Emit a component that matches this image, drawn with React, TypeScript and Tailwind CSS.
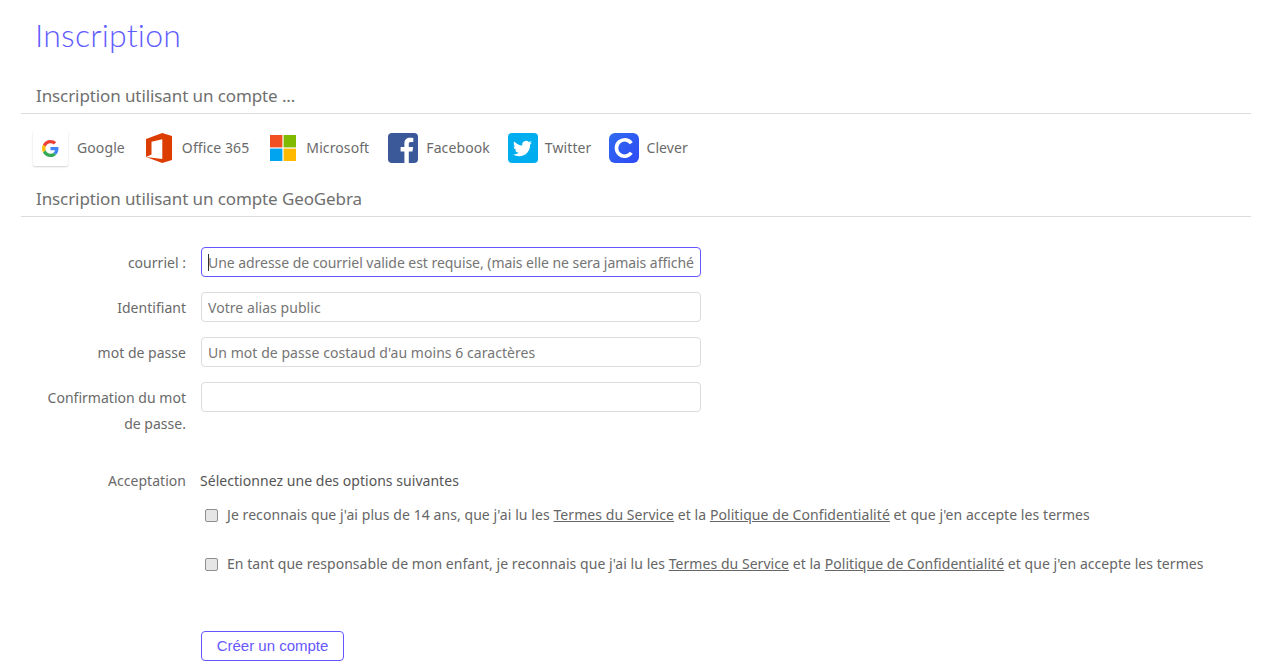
const font = { fontFamily: '"Noto Sans", "Open Sans", sans-serif' };

function Google() {
  return (
    <span className="w-[35px] h-[35px] bg-white shadow-[0_1px_2px_rgba(0,0,0,0.18)] rounded-[2px] flex items-center justify-center">
      <svg width="17" height="17" viewBox="0 0 48 48">
        <path fill="#EA4335" d="M24 9.500c3.500 0 6.700 1.300 9.200 3.400l6.900-6.900C35.900 2.400 30.300 0 24 0 14.600 0 6.500 5.400 2.600 13.200l8 6.200C12.400 13.700 17.700 9.500 24 9.500z" />
        <path fill="#4285F4" d="M46.500 24.500c0-1.600-.1-3.100-.4-4.500H24v9h12.700c-.6 2.900-2.200 5.400-4.700 7l7.300 5.700c4.300-4 7.200-9.900 7.200-17.200z" />
        <path fill="#FBBC05" d="M10.500 28.600c-.5-1.400-.8-3-.8-4.600s.3-3.200.8-4.600l-8-6.200C.9 16.500 0 20.100 0 24s.9 7.500 2.600 10.800l7.900-6.200z" />
        <path fill="#34A853" d="M24 48c6.500 0 11.900-2.100 15.900-5.800L32.600 36.500c-2.200 1.500-5 2.300-8.600 2.300-6.300 0-11.600-4.200-13.500-9.900l-8 6.200C6.500 42.600 14.600 48 24 48z" />
      </svg>
    </span>
  );
}

function Office() {
  return (
    <svg width="26" height="30" viewBox="0 0 26 30">
      <path fill="#DC3E02" d="M0 5.900 16.300 0 26 3v24l-9.700 3L0 24.100l16.300 2V6.300L5.500 8.700v12.800L0 24.100z" />
    </svg>
  );
}

function Microsoft() {
  return (
    <svg width="26" height="26" viewBox="0 0 26 26">
      <rect x="0" y="0" width="12.400" height="12.400" fill="#F25022" />
      <rect x="13.600" y="0" width="12.400" height="12.400" fill="#7FBA00" />
      <rect x="0" y="13.600" width="12.400" height="12.400" fill="#00A4EF" />
      <rect x="13.600" y="13.600" width="12.400" height="12.400" fill="#FFB900" />
    </svg>
  );
}

function Facebook() {
  return (
    <span className="w-[30px] h-[30px] rounded-[4px] bg-[#3B5998] flex overflow-hidden">
      <svg width="30" height="30" viewBox="0 0 30 30">
        <path fill="#fff" d="M20.800 30V18.500h3.700l.6-4.500h-4.300v-2.800c0-1.300.4-2.200 2.200-2.200h2.300V5c-.4-.1-1.800-.2-3.300-.2-3.300 0-5.600 2-5.600 5.700V14h-3.800v4.500h3.800V30z" />
      </svg>
    </span>
  );
}

function Twitter() {
  return (
    <span className="w-[30px] h-[30px] rounded-[4px] bg-[#00AEEF] flex items-center justify-center">
      <svg width="19" height="19" viewBox="0 0 24 24">
        <path fill="#fff" d="M23.950 4.570a10 10 0 0 1-2.820.770 4.960 4.960 0 0 0 2.160-2.720c-.950.550-2 .950-3.130 1.180a4.920 4.920 0 0 0-8.380 4.480C7.690 8.090 4.070 6.130 1.640 3.160a4.820 4.820 0 0 0-.660 2.470c0 1.710.870 3.210 2.190 4.100a4.900 4.900 0 0 1-2.230-.620v.060a4.920 4.920 0 0 0 3.950 4.830 5 5 0 0 1-2.210.080 4.940 4.940 0 0 0 4.600 3.420A9.870 9.870 0 0 1 0 19.540a14 14 0 0 0 7.560 2.210c9.050 0 14-7.500 14-13.980 0-.210 0-.420-.020-.630a9.940 9.940 0 0 0 2.410-2.570z" />
      </svg>
    </span>
  );
}

function Clever() {
  return (
    <span className="w-[30px] h-[30px] rounded-[6px] bg-gradient-to-br from-[#2F6AF0] to-[#3048F5] flex items-center justify-center">
      <svg width="22" height="22" viewBox="0 0 22 22">
        <path fill="none" stroke="#fff" strokeWidth="3.600" d="M18.300 6.200A8.200 8.200 0 1 0 18.300 15.800" />
      </svg>
    </span>
  );
}

function Provider({ icon, label, cls }: { icon: React.ReactNode; label: string; cls: string }) {
  return (
    <div className={`flex items-center ${cls}`}>
      {icon}
      <span className="text-[14px] text-[#6a6a6a] tracking-[0.1px] mb-[2px]">{label}</span>
    </div>
  );
}

function Field({ label, placeholder, focus }: { label: React.ReactNode; placeholder?: string; focus?: boolean }) {
  return (
    <div className="flex items-start mb-[15px]">
      <label className="w-[165px] shrink-0 text-right text-[14px] leading-[26px] pt-[3px] text-[#6a6a6a] tracking-[0.02px]">{label}</label>
      <div className="relative ml-[15px]">
        <input
          readOnly
          placeholder={placeholder}
          className={`block w-[500px] h-[30px] rounded-[4px] border bg-white px-[6px] text-[14px] outline-none placeholder:text-[#757575] ${focus ? "border-[#6557FF] tracking-[-0.05px]" : "border-[#dcdcdc] tracking-[0.05px]"}`}
        />
        {focus && <span className="absolute left-[7px] top-[7px] w-px h-[17px] bg-[#333]" />}
      </div>
    </div>
  );
}

function Box() {
  return <span className="block w-[13px] h-[13px] shrink-0 rounded-[2px] border border-[#8f8f8f] bg-[#e6e6e6]" />;
}

function Link({ children }: { children: React.ReactNode }) {
  return <span className="underline">{children}</span>;
}

export default function App() {
  return (
    <div style={font} className="w-[1263px] h-[668px] overflow-hidden bg-white pl-[21px] pr-[12px]">
      <h1 className="pl-[14px] pt-[13px] h-[82px] text-[32px] leading-[44px] font-light text-[#5f5cff] tracking-[0.2px]" style={{ fontFamily: '"Lato", sans-serif' }}>
        Inscription
      </h1>
      <h2 className="pl-[15px] h-[31px] text-[17px] font-normal leading-[28px] text-[#6f6f6f] border-b border-[#dcdcdc] box-content tracking-[-0.1px]">
        Inscription utilisant un compte ...
      </h2>
      <div className="flex items-center pl-[12px] h-[68px]">
        <Provider icon={<Google />} label="Google" cls="gap-[9px] mr-[21px]" />
        <Provider icon={<Office />} label="Office 365" cls="gap-[10px] mr-[21px]" />
        <Provider icon={<Microsoft />} label="Microsoft" cls="gap-[10px] mr-[19px]" />
        <Provider icon={<Facebook />} label="Facebook" cls="gap-[8px] mr-[18px]" />
        <Provider icon={<Twitter />} label="Twitter" cls="gap-[7px] mr-[18px]" />
        <Provider icon={<Clever />} label="Clever" cls="gap-[7px]" />
      </div>
      <h2 className="pl-[15px] h-[34px] text-[17px] leading-[34px] text-[#6f6f6f] border-b border-[#dcdcdc] box-content tracking-[-0.1px]">
        Inscription utilisant un compte GeoGebra
      </h2>
      <div className="pt-[30px]">
        <Field focus label="courriel :" placeholder="Une adresse de courriel valide est requise, (mais elle ne sera jamais affichée)" />
        <Field label="Identifiant" placeholder="Votre alias public" />
        <Field label="mot de passe" placeholder="Un mot de passe costaud d'au moins 6 caractères" />
        <Field label={<>Confirmation du mot<br />de passe.</>} />
      </div>
      <div className="flex mt-[32px] text-[14px] leading-[24px] text-[#6a6a6a] tracking-[0.04px]">
        <span className="w-[165px] text-right shrink-0">Acceptation</span>
        <span className="ml-[14px] text-[#555]">Sélectionnez une des options suivantes</span>
      </div>
      <div className="pl-[184px] pt-[10px] text-[14px] leading-[24px] text-[#666]">
        <div className="flex items-center gap-[9px] h-[24px] tracking-[0.07px]">
          <Box />
          <span>Je reconnais que j'ai plus de 14 ans, que j'ai lu les <Link>Termes du Service</Link> et la <Link>Politique de Confidentialité</Link> et que j'en accepte les termes</span>
        </div>
        <div className="flex items-center gap-[9px] h-[24px] mt-[25px] tracking-[0.05px]">
          <Box />
          <span>En tant que responsable de mon enfant, je reconnais que j'ai lu les <Link>Termes du Service</Link> et la <Link>Politique de Confidentialité</Link> et que j'en accepte les termes</span>
        </div>
      </div>
      <button
        className="block ml-[180px] mt-[55px] w-[143px] h-[30px] rounded-[4px] border border-[#6557FF] bg-white text-[15px] text-[#6557FF]"
        style={{ fontFamily: '"Liberation Sans", Arial, sans-serif' }}
      >
        Créer un compte
      </button>
    </div>
  );
}
